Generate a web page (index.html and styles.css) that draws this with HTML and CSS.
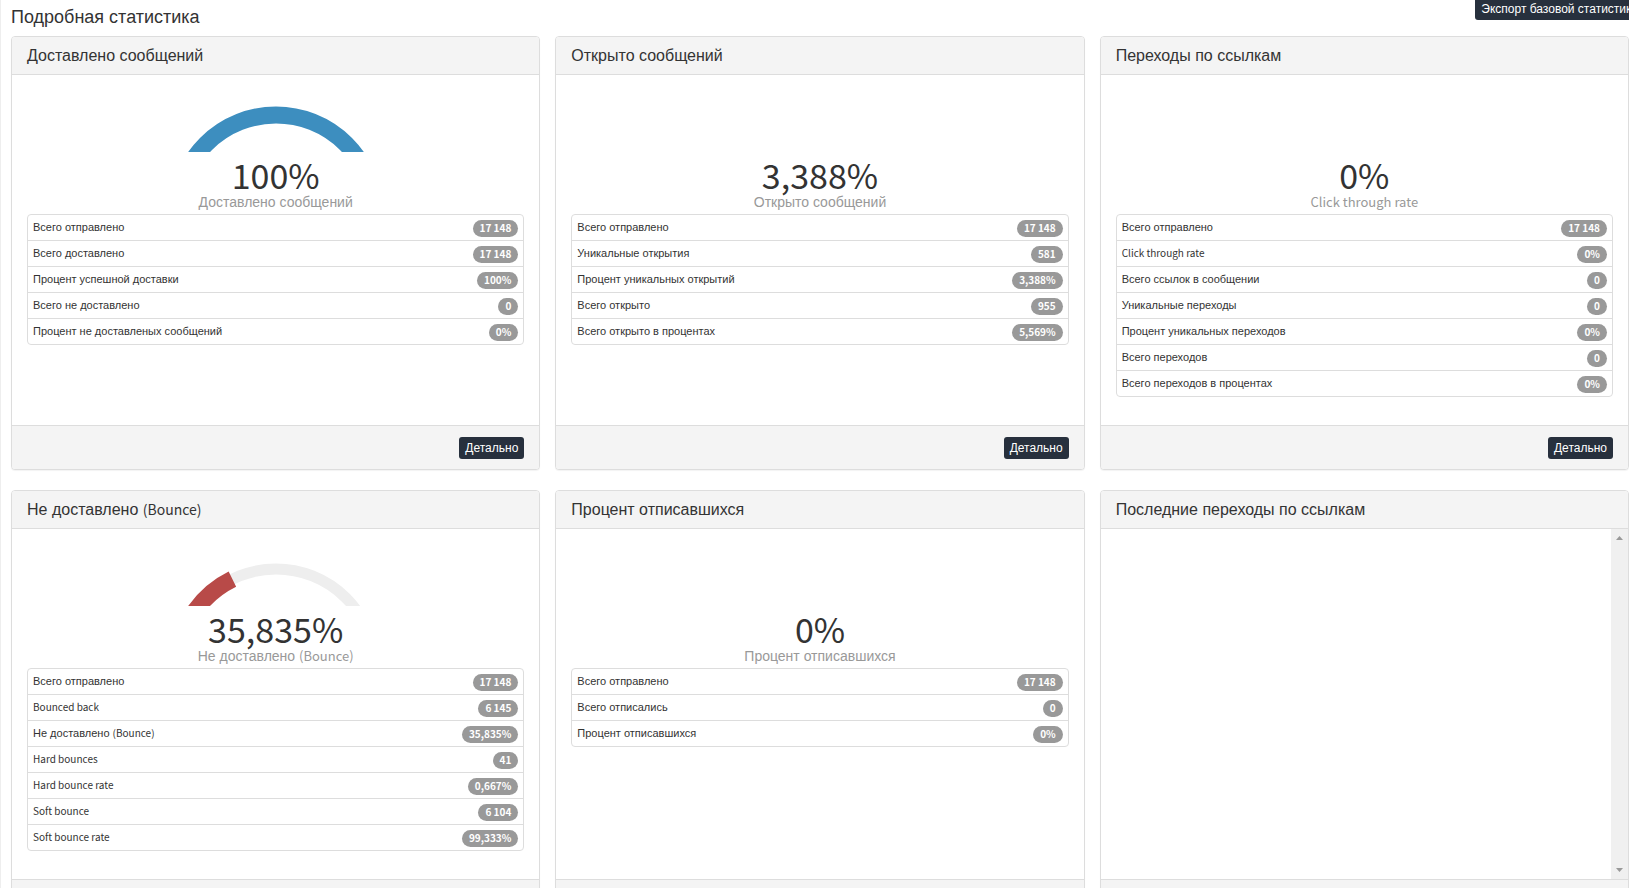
FILE: index.html
```
<!DOCTYPE html>
<html lang="ru">
<head>
    <meta charset="UTF-8">
    <meta name="viewport" content="width=device-width, initial-scale=1.0">
    <title>Подробная статистика</title>
    <link rel="stylesheet" href="styles.css">
</head>
<body>
    <div class="page">
        <div class="page-head">
            <h1>Подробная статистика</h1>
            <button type="button" class="btn btn-export">Экспорт базовой статистики</button>
        </div>

        <div class="panels">
            <section class="panel">
                <h2 class="panel-heading">Доставлено сообщений</h2>
                <div class="panel-body">
                    <div class="gauge">
                        <svg width="180" height="48" viewBox="0 0 180 48">
                            <circle class="gauge-blue" cx="90" cy="110" r="99"/>
                        </svg>
                    </div>
                    <div class="value">100%</div>
                    <div class="label">Доставлено сообщений</div>
                    <ul class="list">
                        <li>Всего отправлено <span class="badge">17 148</span></li>
                        <li>Всего доставлено <span class="badge">17 148</span></li>
                        <li>Процент успешной доставки <span class="badge">100%</span></li>
                        <li>Всего не доставлено <span class="badge">0</span></li>
                        <li>Процент не доставленых сообщений <span class="badge">0%</span></li>
                    </ul>
                </div>
                <div class="panel-footer"><button type="button" class="btn">Детально</button></div>
            </section>

            <section class="panel">
                <h2 class="panel-heading">Открыто сообщений</h2>
                <div class="panel-body">
                    <div class="gauge"></div>
                    <div class="value">3,388%</div>
                    <div class="label">Открыто сообщений</div>
                    <ul class="list">
                        <li>Всего отправлено <span class="badge">17 148</span></li>
                        <li>Уникальные открытия <span class="badge">581</span></li>
                        <li>Процент уникальных открытий <span class="badge">3,388%</span></li>
                        <li>Всего открыто <span class="badge">955</span></li>
                        <li>Всего открыто в процентах <span class="badge">5,569%</span></li>
                    </ul>
                </div>
                <div class="panel-footer"><button type="button" class="btn">Детально</button></div>
            </section>

            <section class="panel">
                <h2 class="panel-heading">Переходы по ссылкам</h2>
                <div class="panel-body">
                    <div class="gauge"></div>
                    <div class="value">0%</div>
                    <div class="label"><span class="en">Click through rate</span></div>
                    <ul class="list">
                        <li>Всего отправлено <span class="badge">17 148</span></li>
                        <li><span class="en">Click through rate</span> <span class="badge">0%</span></li>
                        <li>Всего ссылок в сообщении <span class="badge">0</span></li>
                        <li>Уникальные переходы <span class="badge">0</span></li>
                        <li>Процент уникальных переходов <span class="badge">0%</span></li>
                        <li>Всего переходов <span class="badge">0</span></li>
                        <li>Всего переходов в процентах <span class="badge">0%</span></li>
                    </ul>
                </div>
                <div class="panel-footer"><button type="button" class="btn">Детально</button></div>
            </section>

            <section class="panel">
                <h2 class="panel-heading">Не доставлено <span class="en">(Bounce)</span></h2>
                <div class="panel-body">
                    <div class="gauge">
                        <svg width="180" height="48" viewBox="0 0 180 48">
                            <circle class="gauge-track" cx="90" cy="110" r="99"/>
                            <path class="gauge-red" d="M-9 110A99 99 0 0 1 46.4 21.1"/>
                        </svg>
                    </div>
                    <div class="value">35,835%</div>
                    <div class="label">Не доставлено <span class="en">(Bounce)</span></div>
                    <ul class="list">
                        <li>Всего отправлено <span class="badge">17 148</span></li>
                        <li><span class="en">Bounced back</span> <span class="badge">6 145</span></li>
                        <li><span>Не доставлено <span class="en">(Bounce)</span></span> <span class="badge">35,835%</span></li>
                        <li><span class="en">Hard bounces</span> <span class="badge">41</span></li>
                        <li><span class="en">Hard bounce rate</span> <span class="badge">0,667%</span></li>
                        <li><span class="en">Soft bounce</span> <span class="badge">6 104</span></li>
                        <li><span class="en">Soft bounce rate</span> <span class="badge">99,333%</span></li>
                    </ul>
                </div>
                <div class="panel-footer"><button type="button" class="btn">Детально</button></div>
            </section>

            <section class="panel">
                <h2 class="panel-heading">Процент отписавшихся</h2>
                <div class="panel-body">
                    <div class="gauge"></div>
                    <div class="value">0%</div>
                    <div class="label">Процент отписавшихся</div>
                    <ul class="list">
                        <li>Всего отправлено <span class="badge">17 148</span></li>
                        <li>Всего отписались <span class="badge">0</span></li>
                        <li>Процент отписавшихся <span class="badge">0%</span></li>
                    </ul>
                </div>
                <div class="panel-footer"><button type="button" class="btn">Детально</button></div>
            </section>

            <section class="panel">
                <h2 class="panel-heading">Последние переходы по ссылкам</h2>
                <div class="panel-body panel-scroll">
                    <div class="scrollbar">
                        <svg width="7" height="4" viewBox="0 0 7 4"><path d="M0 4L3.5 0L7 4z"/></svg>
                        <svg width="7" height="4" viewBox="0 0 7 4"><path d="M0 0L3.5 4L7 0z"/></svg>
                    </div>
                </div>
                <div class="panel-footer"><button type="button" class="btn">Детально</button></div>
            </section>
        </div>
    </div>
</body>
</html>
```
FILE: styles.css
```
* {
    box-sizing: border-box;
}
body {
    margin: 0;
    height: 100vh;
    overflow: hidden;
    background: #fff;
    color: #333;
    font-family: "Liberation Sans", Arial, sans-serif;
    font-size: 14px;
}
.page {
    border-left: 1px solid #eee;
    padding-left: 10px;
}
.page-head {
    display: flex;
    justify-content: space-between;
    align-items: flex-start;
    height: 36px;
}
h1 {
    margin: 0;
    padding-top: 6px;
    font-size: 18px;
    line-height: 22px;
    font-weight: normal;
}
.btn {
    height: 22px;
    padding: 0 6px;
    border: none;
    border-radius: 3px;
    background: #27303d;
    color: #fff;
    font-family: inherit;
    font-size: 12px;
    line-height: 20px;
    white-space: nowrap;
    cursor: pointer;
}
.btn-export {
    margin-top: -2px;
    margin-right: -15px;
}
.panels {
    display: grid;
    grid-template-columns: repeat(3, 1fr);
    gap: 20px 15px;
}
.panel {
    border: 1px solid #ddd;
    border-radius: 4px;
    background: #fff;
    box-shadow: 0 1px 1px rgba(0,0,0,0.05);
    overflow: hidden;
}
.panel-heading {
    margin: 0;
    padding: 8px 15px;
    border-bottom: 1px solid #ddd;
    background: #f4f4f4;
    font-size: 16px;
    line-height: 21px;
    font-weight: normal;
}
.panel-body {
    height: 350px;
    padding: 0 15px;
}
.panel-footer {
    display: flex;
    justify-content: flex-end;
    padding: 11px 15px 10px;
    border-top: 1px solid #ddd;
    background: #f4f4f4;
}
.gauge {
    display: flex;
    justify-content: center;
    align-items: flex-end;
    height: 80px;
    padding-bottom: 3px;
}
.gauge circle, .gauge path {
    fill: none;
    stroke-width: 17;
}
.gauge-blue {
    stroke: #3d8ebf;
}
.gauge-red {
    stroke: #b84a48;
}
.gauge .gauge-track {
    stroke: #eee;
    stroke-width: 11;
}
/* latin letters and digits */
.value, .badge, .en {
    font-family: "Noto Sans CJK JP", "Liberation Sans", sans-serif;
}
.value {
    font-size: 34px;
    line-height: 40px;
    text-align: center;
}
.label {
    height: 19px;
    color: #999;
    font-size: 14px;
    line-height: 14px;
    text-align: center;
}
.en {
    font-size: 13px;
    line-height: 1;
}
.panel-heading .en {
    font-size: 14px;
}
.list {
    margin: 0;
    padding: 0;
    border: 1px solid #ddd;
    border-radius: 4px;
    list-style: none;
}
.list li {
    display: flex;
    justify-content: space-between;
    height: 26px;
    padding: 5px 5px 0;
    border-bottom: 1px solid #ddd;
    font-size: 11px;
    line-height: 15px;
}
.list li:last-child {
    height: 25px;
    border-bottom: none;
}
.list .en {
    font-size: 10px;
    line-height: 13px;
}
.badge {
    height: 17px;
    padding: 0 7px;
    border-radius: 9px;
    background: #999;
    color: #fff;
    font-size: 10px;
    line-height: 15px;
    font-weight: bold;
}
.panel-scroll {
    display: flex;
    justify-content: flex-end;
    padding: 0;
}
.scrollbar {
    display: flex;
    flex-direction: column;
    justify-content: space-between;
    align-items: center;
    width: 17px;
    padding: 7px 0;
    background: #f0f0f0;
}
.scrollbar path {
    fill: #999;
}
```
